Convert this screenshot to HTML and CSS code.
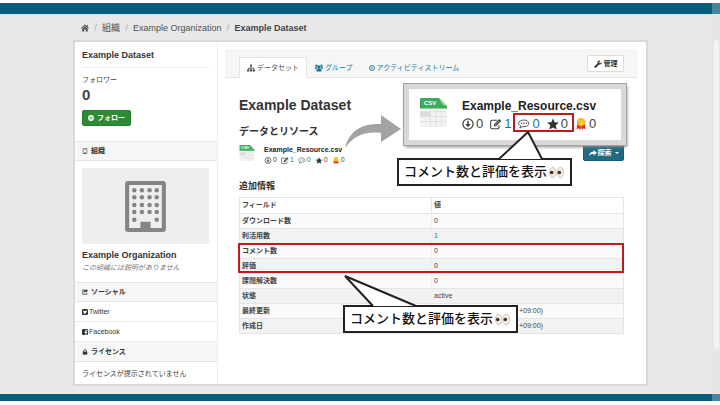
FILE: index.html
```html
<!DOCTYPE html>
<html lang="ja">
<head>
<meta charset="utf-8">
<title>Example Dataset</title>
<link rel="stylesheet" href="styles.css">
</head>
<body>
<svg class="defs" aria-hidden="true">
  <symbol id="home" viewBox="0 0 16 16"><path d="M8 1 0 8l1 1.300L8 3.300l7 6 1-1.300-2.500-2.200V2h-2v2zM8 4.600 2.500 9.300V15H6.500v-4.500h3V15h4V9.300z"/></symbol>
  <symbol id="plus" viewBox="0 0 16 16"><circle cx="8" cy="8" r="6" fill="none" stroke="currentColor" stroke-width="3.500"/><path d="M7 5h2v2h2v2H9v2H7V9H5V7h2z"/></symbol>
  <symbol id="building" viewBox="0 0 40 50"><path fill-rule="evenodd" d="M3 0h34q3 0 3 3v44q0 3-3 3H3q-3 0-3-3V3q0-3 3-3zm1 4v42h11v-6h10v6h11V4z"/><g><circle cx="9" cy="9" r="2.200"/><circle cx="16.500" cy="9" r="2.200"/><circle cx="24" cy="9" r="2.200"/><circle cx="31" cy="9" r="2.200"/><circle cx="9" cy="16" r="2.200"/><circle cx="16.500" cy="16" r="2.200"/><circle cx="24" cy="16" r="2.200"/><circle cx="31" cy="16" r="2.200"/><circle cx="9" cy="23.500" r="2.200"/><circle cx="16.500" cy="23.500" r="2.200"/><circle cx="24" cy="23.500" r="2.200"/><circle cx="31" cy="23.500" r="2.200"/><circle cx="9" cy="30.500" r="2.200"/><circle cx="16.500" cy="30.500" r="2.200"/><circle cx="24" cy="30.500" r="2.200"/><circle cx="31" cy="30.500" r="2.200"/><circle cx="9" cy="38" r="2.200"/><circle cx="31" cy="38" r="2.200"/></g></symbol>
  <symbol id="share-box" viewBox="0 0 16 16"><path d="M7 2.500H2V14h11v-4" fill="none" stroke="currentColor" stroke-width="2"/><path d="M10 0l6 4.500L10 9V6.500Q6 6.500 5.500 10.500 3 3 10 2.800z"/></symbol>
  <symbol id="twitter" viewBox="0 0 16 16"><path fill-rule="evenodd" d="M3 0h10q3 0 3 3v10q0 3-3 3H3q-3 0-3-3V3q0-3 3-3zm0 4q-.5 2 1 3.500-.5 2 1.500 3L3 11.500q8 3.500 9.500-5L14 5l-1.500-.5Q10 2.500 8.500 6 5 6 3 4z"/></symbol>
  <symbol id="facebook" viewBox="0 0 16 16"><path fill-rule="evenodd" d="M3 0h10q3 0 3 3v10q0 3-3 3h-1.500v-6H14V7.500h-2.500V6q0-1 1-1H14V2.500h-2.500Q9 2.500 9 5.500v2H7V10h2v6H3q-3 0-3-3V3q0-3 3-3z"/></symbol>
  <symbol id="lock" viewBox="0 0 16 16"><path d="M2 7h12v8H2z"/><path d="M4.500 8V5a3.500 3.500 0 0 1 7 0v3" fill="none" stroke="currentColor" stroke-width="2"/></symbol>
  <symbol id="sitemap" viewBox="0 0 16 16"><path d="M6 1h4v4H9v2.500h5V11h2v4h-5v-4h1.500V9H9v2h1v4H6v-4h1V9H3.500v2H5v4H0v-4h2V7.500h5V5H6z"/></symbol>
  <symbol id="group" viewBox="0 0 16 16"><circle cx="8" cy="5.500" r="3.200"/><circle cx="3" cy="3.500" r="2.300"/><circle cx="13" cy="3.500" r="2.300"/><path d="M3 15v-3q0-3.500 3-3.500h4q3 0 3 3.500v3zM0 10V7q1-1 4-1l1 2q-2.500 0-3 2zM16 10V7q-1-1-4-1l-1 2q2.500 0 3 2z"/></symbol>
  <symbol id="clock" viewBox="0 0 16 16"><circle cx="8" cy="8" r="6.500" fill="none" stroke="currentColor" stroke-width="2.500"/><path d="M8 4v5H5" fill="none" stroke="currentColor" stroke-width="1.800"/></symbol>
  <symbol id="wrench" viewBox="0 0 16 16"><path d="M1 12.500 7 7Q6 1.500 12 1l1 .5L10.500 4v2l2 .5L15.500 4Q16 9.500 9.500 9.500L4 15.300Q2.500 16 1.200 14.800 0 13.500 1 12.500z"/></symbol>
  <symbol id="share" viewBox="0 0 16 16"><path d="M9 2l7 5.500L9 13v-3.500Q3 9 1 14-.5 6 9 5.500z"/></symbol>
  <symbol id="download" viewBox="0 0 16 16"><circle cx="8" cy="8" r="6.800" fill="none" stroke="currentColor" stroke-width="1.700"/><path d="M7 3.500h2V8h2.800L8 12.300 4.200 8H7z"/></symbol>
  <symbol id="edit" viewBox="0 0 18 16"><path d="M11 2.500H3Q1 2.500 1 4.500V13q0 2 2 2h8.500q2 0 2-2v-3" fill="none" stroke="currentColor" stroke-width="1.600"/><path d="M6 8.500 14 .5l3 3-8 8H6z"/><path d="m7.500 9.500 6-6" stroke="#fff" stroke-width=".7"/></symbol>
  <symbol id="comment" viewBox="0 0 18 16"><path d="M9 2c9 0 10 10 0 10-.8 0-1.500 0-2.200-.2Q4.500 14 2.500 14q1.500-1.300 1.500-3C-2 8 1 2 9 2z" fill="none" stroke="currentColor" stroke-width="1.300"/><circle cx="5.500" cy="7" r="1.100"/><circle cx="9" cy="7" r="1.100"/><circle cx="12.500" cy="7" r="1.100"/></symbol>
  <symbol id="star" viewBox="0 0 16 16"><path d="m8 .5 2.300 5 5.500.6-4.100 3.700 1.200 5.500L8 12.500l-4.900 2.800 1.200-5.500L.2 6.100l5.500-.6z"/></symbol>
  <symbol id="medal" viewBox="0 0 16 16"><path fill="#e12b20" d="m3 8-1 7 2.500-1.500L7 16l1-5 1 5 2.500-2.500L14 15l-1-7z"/><circle cx="8" cy="5.500" r="5.500" fill="#f5b914"/><circle cx="8" cy="5.500" r="3.300" fill="#ffd83c"/><path d="m5 7 5-4" stroke="#dc8f12"/></symbol>
  <symbol id="csv" viewBox="0 0 27 29"><path fill="#f3f3f3" d="M0 10h27v17q0 2-2 2H2q-2 0-2-2z"/><path fill="#dcdcdc" d="M0 13h10v6H0z"/><path d="M0 13.500h27M0 18.500h27M0 23.500h27M10.500 11v18M16 11v18M21.500 11v18" stroke="#e1e1e1" fill="none"/><path fill="#3faa5c" d="M0 1q0-1 1-1h18l8 8v2.500H0z"/><path fill="#8bd39e" d="M19 0l8 8q-5 1-8-8z"/></symbol>
  <symbol id="eyes" viewBox="0 0 15 13"><g fill="#f3ece4" stroke="#c9b9a9" stroke-width=".8"><ellipse cx="3.700" cy="6.500" rx="3.200" ry="5.300"/><ellipse cx="11.300" cy="6.500" rx="3.200" ry="5.300"/></g><g fill="#49301f"><circle cx="2.700" cy="6.500" r="1.800"/><circle cx="10.300" cy="6.500" r="1.800"/></g></symbol>
</svg>
<div class="page">
  <header class="topbar"></header>
  <div class="body">
    <nav class="crumbs" aria-label="パンくず">
      <a href="#" aria-label="ホーム"><svg class="ic-home"><use href="#home"/></svg></a><i>/</i><a href="#">組織</a><i>/</i><a href="#">Example Organization</a><i>/</i><a href="#" class="current">Example Dataset</a>
    </nav>
    <div class="card">
      <aside class="side">
        <section class="intro">
          <h2>Example Dataset</h2>
          <div class="label">フォロワー</div>
          <div class="count">0</div>
          <button class="follow"><svg class="ic"><use href="#plus"/></svg>フォロー</button>
        </section>
        <h3><svg class="ic-sm" viewBox="0 0 16 16"><path d="M3 1h10v14H3z" fill="none" stroke="currentColor" stroke-width="1.500"/><path d="M6 12h4v3H6zM5 4h1v1H5zm3 0h1v1H8zm2 0h1v1h-1zM5 7h1v1H5zm3 0h1v1H8z"/></svg>組織</h3>
        <section class="org">
          <div class="thumb"><svg><use href="#building"/></svg></div>
          <h4>Example Organization</h4>
          <p>この組織には説明がありません</p>
        </section>
        <h3><svg class="ic-sm"><use href="#share-box"/></svg>ソーシャル</h3>
        <a class="social" href="#"><svg class="ic-sm"><use href="#twitter"/></svg>Twitter</a>
        <a class="social" href="#"><svg class="ic-sm"><use href="#facebook"/></svg>Facebook</a>
        <h3><svg class="ic-sm"><use href="#lock"/></svg>ライセンス</h3>
        <p class="license">ライセンスが提示されていません</p>
      </aside>
      <main class="main">
        <div class="tabs">
          <a href="#" class="tab active"><svg class="ic"><use href="#sitemap"/></svg>データセット</a>
          <a href="#" class="tab"><svg class="ic"><use href="#group"/></svg>グループ</a>
          <a href="#" class="tab"><svg class="ic-sm"><use href="#clock"/></svg>アクティビティストリーム</a>
          <button class="manage"><svg class="ic"><use href="#wrench"/></svg>管理</button>
        </div>
        <div class="content">
          <h1>Example Dataset</h1>
          <h2>データとリソース</h2>
          <div class="resource">
            <div class="file"><svg><use href="#csv"/></svg><span>CSV</span></div>
            <div class="info">
              <a href="#" class="name">Example_Resource.csv</a>
              <div class="stats">
                <span><svg><use href="#download"/></svg>0</span><span><svg><use href="#edit"/></svg><a href="#">1</a></span><span><svg><use href="#comment"/></svg><a href="#">0</a></span><span><svg class="dark"><use href="#star"/></svg>0</span><span><svg><use href="#medal"/></svg>0</span>
              </div>
            </div>
            <button class="explore"><svg class="ic"><use href="#share"/></svg>探索<b class="caret"></b></button>
          </div>
          <h3>追加情報</h3>
          <table>
            <thead><tr><th>フィールド</th><th>値</th></tr></thead>
            <tbody>
              <tr><th>ダウンロード数</th><td>0</td></tr>
              <tr><th>利活用数</th><td><a href="#">1</a></td></tr>
              <tr><th>コメント数</th><td>0</td></tr>
              <tr><th>評価</th><td>0</td></tr>
              <tr><th>課題解決数</th><td>0</td></tr>
              <tr><th>状態</th><td>active</td></tr>
              <tr><th>最終更新</th><td class="zone">+09:00)</td></tr>
              <tr><th>作成日</th><td class="zone">+09:00)</td></tr>
            </tbody>
          </table>
        </div>
      </main>
    </div>
  </div>
  <footer class="bottombar"></footer>
  <div class="track"><div class="thumbbar"></div></div>

  <svg class="arrow" viewBox="0 0 58 36"><path fill="#a3a3a3" d="M1 33C5 16 18 8 37 9V0l20 14-20 13v-9C22 16 10 20 1 33z"/></svg>
  <div class="zoomed">
    <div class="file"><svg><use href="#csv"/></svg><span>CSV</span></div>
    <div class="info">
      <a href="#" class="name">Example_Resource.csv</a>
      <div class="stats">
        <span><svg><use href="#download"/></svg>0</span><span><svg><use href="#edit"/></svg><a href="#">1</a></span><span><svg><use href="#comment"/></svg><a href="#">0</a></span><span><svg class="dark"><use href="#star"/></svg>0</span><span><svg><use href="#medal"/></svg>0</span>
      </div>
    </div>
  </div>
  <div class="mark mark-stats"></div>
  <div class="mark mark-rows"></div>
  <div class="note note-top">コメント数と評価を表示<svg><use href="#eyes"/></svg></div>
  <svg class="tail tail-top" viewBox="0 0 48 30"><path d="M2 28 31 1l14 27"/></svg>
  <div class="note note-bottom">コメント数と評価を表示<svg><use href="#eyes"/></svg></div>
  <svg class="tail tail-bottom" viewBox="0 0 76 34"><path d="M30 32 2 2l71 30"/></svg>
</div>
</body>
</html>
```
FILE: styles.css
```css
* { box-sizing: border-box; }
body {
  margin: 0;
  background: #fff;
  color: #444;
  font: 7px/10px "Liberation Sans", "Noto Sans CJK JP", sans-serif;
}
h1, h2, h3, h4, p { margin: 0; }
a { color: inherit; text-decoration: none; }
button { font: inherit; cursor: pointer; }
svg { fill: currentColor; flex: none; }
.defs { position: absolute; width: 0; height: 0; }
.ic { width: 8px; height: 8px; }
.ic-sm { width: 6px; height: 6px; }

.page { position: relative; padding: 3px 0 4px; overflow: hidden; }
.topbar { height: 11px; background: #065d7c; border-top: 1px solid #35505e; }
.bottombar { height: 7px; background: #065d7c; }
.body { background: #e8e8e8; border-top: 1px solid #d9e9ef; padding: 7px 74px 10px 75px; }

.crumbs { display: flex; align-items: center; height: 12px; margin-bottom: 8px; padding-left: 6px; font-size: 9px; line-height: 12px; color: #505050; }
.crumbs a { display: flex; }
.crumbs i { width: 13px; text-align: center; font-style: normal; color: #aaa; }
.crumbs .current { font-weight: bold; color: #444; }
.ic-home { width: 8px; height: 8px; }

.card { display: flex; background: #fff; box-shadow: 0 0 0 2px #d9d9d9; }
.side { flex: 0 0 143px; border-right: 1px solid #eee; }
.intro { padding: 7px 8px 15px 7px; }
.intro h2 { padding-bottom: 6px; border-bottom: 1px solid #eee; font-size: 9px; line-height: 12px; color: #333; }
.label { margin-top: 7px; }
.count { margin-top: 1px; font-size: 15px; line-height: 18px; font-weight: bold; }
.follow { display: flex; align-items: center; justify-content: center; gap: 3px; width: 49px; height: 16px; margin-top: 6px; padding: 0; border: 1px solid #277c2c; border-radius: 2px; background: #2f8a35; color: #fff; font-weight: bold; }
.follow .ic { width: 6px; height: 6px; }
.side h3 { display: flex; align-items: center; gap: 3px; height: 20px; padding-left: 7px; border: 1px solid #e6e6e6; border-width: 1px 0; background: #f6f6f6; font-size: 7px; color: #333; }
.org { padding: 7px 8px 9px 7px; }
.thumb { display: flex; justify-content: center; align-items: center; height: 76px; border-radius: 2px; background: #eee; color: #858585; }
.thumb svg { width: 41px; height: 51px; }
.org h4 { margin-top: 5px; font-size: 9px; line-height: 12px; color: #333; }
.org p { margin-top: 2px; font-style: italic; color: #777; }
.social { display: flex; align-items: center; gap: 1px; height: 20px; padding-left: 7px; border-bottom: 1px solid #eee; color: #333; }
.social + h3 { border-top: 0; }
.license { padding: 7px 7px 4px; }

.main { flex: 1; min-width: 0; padding: 7px 8px 50px 7px; }
.tabs { display: flex; height: 29px; padding: 8px 14px 0; border-bottom: 1px solid #e4e4e4; background: #f6f6f6; color: #187794; }
.tab { display: flex; align-items: center; gap: 2px; height: 21px; padding: 0 8px; }
.tab.active { border: 1px solid #e4e4e4; border-bottom: 0; background: #fff; color: #555; padding: 0 7px; }
.manage { display: flex; align-items: center; justify-content: center; gap: 2px; width: 37px; height: 17px; margin: -2px 0 0 auto; padding: 0; border: 1px solid #ddd; border-radius: 2px; background: #fff; color: #333; font-weight: bold; }
.content { padding: 18px 14px 0; }
.content h1 { font-size: 14px; line-height: 18px; color: #333; }
.content h2 { margin-top: 11px; font-size: 10px; line-height: 14px; font-weight: bold; color: #333; }
.content h3 { margin: 19px 0 5px; font-size: 9px; line-height: 12px; font-weight: bold; color: #333; }

.resource { display: flex; margin-top: 6px; height: 16px; }
.file { position: relative; flex: none; }
.file svg { display: block; width: 100%; height: 100%; }
.file span { position: absolute; top: 0; left: 2px; color: #fff; font-weight: bold; }
.resource .file { width: 16px; height: 16px; margin-right: 9px; }
.resource .file span { font-size: 4px; line-height: 6px; }
.info .name { display: block; font-weight: bold; color: #222; }
.stats { display: flex; align-items: center; }
.stats span { display: flex; align-items: center; }
.stats a { color: #187794; }
.stats .dark { color: #333; }
.resource .stats { gap: 4px; }
.resource .stats span { gap: 1px; }
.resource .stats svg { width: 8px; height: 7px; }
.explore { display: flex; align-items: center; justify-content: center; gap: 1px; width: 41px; height: 16px; margin-left: auto; padding: 0; border: 1px solid #155f76; border-radius: 2px; background: #206b82; color: #fff; font-weight: bold; }
.caret { margin-left: 2px; border: 2px solid transparent; border-top-color: #fff; border-bottom: 0; }

table { width: 100%; border-collapse: collapse; table-layout: fixed; }
th, td { padding: 2px; border: 1px solid #e5e5e5; text-align: left; line-height: 10px; }
th { color: #444; font-weight: bold; }
thead th { padding-bottom: 3px; }
tbody th { border-right-color: #eee; }
tbody tr:nth-child(odd) { background: #fafafa; }
tbody tr:nth-child(even) { background: #f2f2f2; }
td a { color: #187794; }
td.zone { padding-left: 87px; }

.track { position: absolute; top: 3px; right: 0; bottom: 4px; width: 8px; background: rgb(225 225 225 / 30%); }
.thumbbar { width: 5px; height: 309px; margin: 37px 0 0 2px; border-radius: 3px; background: #f4f4f4; }

.arrow { position: absolute; left: 344px; top: 115px; width: 58px; height: 36px; }
.zoomed { position: absolute; left: 404px; top: 84px; display: flex; width: 222px; height: 61px; padding: 9px 11px; border: 5px solid #d8d8d8; background: #fff; box-shadow: 0 0 0 1px #a4a4a4, 1px 2px 3px #888; }
.zoomed .file { width: 27px; height: 29px; margin-right: 15px; }
.zoomed .file span { left: 4px; font-size: 6px; }
.zoomed .name { font-size: 12px; line-height: 16px; }
.zoomed .stats { gap: 7px; margin-top: 2px; font-size: 13px; line-height: 16px; }
.zoomed .stats span { gap: 2px; }
.zoomed .stats svg { width: 12px; height: 12px; }

.mark { position: absolute; border: 2px solid #bd1b1e; }
.mark-stats { left: 513px; top: 113px; width: 61px; height: 19px; }
.mark-rows { left: 238px; top: 243px; width: 386px; height: 30px; }
.note { position: absolute; display: flex; align-items: center; width: 175px; height: 28px; padding-left: 5px; border: 2px solid #222; background: #fff; color: #111; font-size: 13px; font-weight: 500; line-height: 18px; white-space: nowrap; }
.note svg { width: 15px; height: 13px; margin-left: 2px; }
.note-top { left: 397px; top: 158px; }
.note-bottom { left: 343px; top: 305px; }
.tail { position: absolute; fill: #fff; stroke: #222; stroke-width: 2; }
.tail-top { left: 497px; top: 131px; width: 48px; height: 30px; }
.tail-bottom { left: 343px; top: 274px; width: 76px; height: 34px; }
```
